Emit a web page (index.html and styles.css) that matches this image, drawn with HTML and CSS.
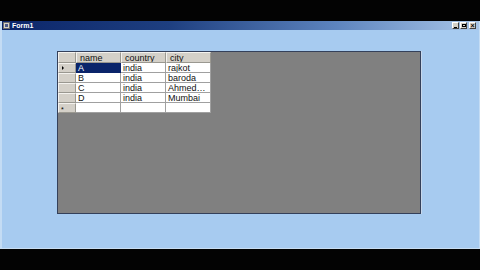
FILE: index.html
```html
<!DOCTYPE html>
<html>
<head>
<meta charset="utf-8">
<link rel="stylesheet" href="styles.css">
</head>
<body>
<div class="screen">
  <div class="black-top"></div>
  <div class="window">
    <div class="titlebar">
      <div class="app-icon"><div class="icon-inner"></div></div>
      <span class="title">Form1</span>
      <div class="spacer"></div>
      <div class="tbtn"><span class="g-min"></span></div>
      <div class="tbtn"><span class="g-max"></span></div>
      <div class="tbtn close"><span class="g-x">×</span></div>
    </div>
    <div class="client">
      <div class="grid">
        <div class="table">
          <div class="hc corner"></div>
          <div class="hc">name</div>
          <div class="hc">country</div>
          <div class="hc">city</div>

          <div class="rh"><span class="arrow"></span></div>
          <div class="c sel">A</div>
          <div class="c">india</div>
          <div class="c">rajkot</div>

          <div class="rh"></div>
          <div class="c">B</div>
          <div class="c">india</div>
          <div class="c">baroda</div>

          <div class="rh"></div>
          <div class="c">C</div>
          <div class="c">india</div>
          <div class="c">Ahmed…</div>

          <div class="rh"></div>
          <div class="c">D</div>
          <div class="c">india</div>
          <div class="c">Mumbai</div>

          <div class="rh"><span class="star">*</span></div>
          <div class="c"></div>
          <div class="c"></div>
          <div class="c"></div>
        </div>
      </div>
    </div>
  </div>
  <div class="black-bottom"></div>
</div>
</body>
</html>
```
FILE: styles.css
```css
html, body {
  margin: 0;
  padding: 0;
  background: #030303;
  width: 480px;
  height: 270px;
  overflow: hidden;
  font-family: "Liberation Sans", Arial, sans-serif;
}
.screen {
  display: flex;
  flex-direction: column;
  width: 480px;
  height: 270px;
}
.black-top {
  height: 21px;
  background: #030303;
  flex: none;
}
.window {
  display: flex;
  flex-direction: column;
  height: 228px;
  flex: none;
  background: #a7cbf0;
  border-left: 2px solid #c4dcf4;
  border-right: 1px solid #c4dcf4;
  border-bottom: 1px solid #c8ddf2;
  box-sizing: border-box;
}
.titlebar {
  height: 9px;
  flex: none;
  display: flex;
  align-items: center;
  background: linear-gradient(to right, #0b2569 0%, #1e3f80 35%, #5d84be 70%, #a9c6e8 100%);
  padding-right: 3px;
}
.app-icon {
  width: 7px;
  height: 7px;
  margin-left: 1px;
  background: #d8d4c8;
  border: 1px solid #6d6d6d;
  box-sizing: border-box;
  display: flex;
  align-items: center;
  justify-content: center;
}
.icon-inner {
  width: 3px;
  height: 3px;
  background: #4a5a8a;
}
.title {
  color: #ffffff;
  font-size: 7px;
  font-weight: bold;
  margin-left: 2px;
  line-height: 9px;
}
.spacer { flex: 1; }
.tbtn {
  width: 7px;
  height: 7px;
  background: #d4d0c8;
  border-top: 1px solid #ffffff;
  border-left: 1px solid #ffffff;
  border-right: 1px solid #404040;
  border-bottom: 1px solid #404040;
  box-sizing: border-box;
  margin-left: 1px;
  display: flex;
  align-items: center;
  justify-content: center;
}
.tbtn.close { margin-left: 2px; }
.g-min {
  width: 3px;
  height: 1px;
  background: #000;
  margin-top: 3px;
}
.g-max {
  width: 4px;
  height: 3px;
  border: 1px solid #000;
  box-sizing: border-box;
}
.g-x {
  font-size: 7px;
  line-height: 5px;
  color: #000;
  font-weight: bold;
}
.client {
  flex: 1;
  padding-left: 55px;
  padding-top: 21px;
}
.grid {
  width: 364px;
  height: 163px;
  box-sizing: border-box;
  background: #808080;
  border: 1px solid #34405a;
  box-shadow: 1px 0 0 #c8d8ec;
}
.table {
  display: grid;
  grid-template-columns: 18px 45px 45px 45px;
  grid-template-rows: 11px 10px 10px 10px 10px 10px;
  width: 153px;
  background: #ffffff;
}
.hc, .rh {
  background: #d4d0c8;
  box-sizing: border-box;
  border-right: 1px solid #9a9890;
  border-bottom: 1px solid #9a9890;
  border-top: 1px solid #f4f2ee;
  border-left: 1px solid #f4f2ee;
}
.hc {
  font-size: 9px;
  line-height: 10px;
  color: #111;
  padding-left: 3px;
  white-space: nowrap;
  overflow: hidden;
}
.rh {
  display: flex;
  align-items: center;
  padding-left: 2px;
}
.arrow {
  width: 0;
  height: 0;
  border-top: 2px solid transparent;
  border-bottom: 2px solid transparent;
  border-left: 2px solid #000;
  margin-left: 1px;
}
.star {
  font-size: 7px;
  line-height: 7px;
  color: #000;
  margin-top: 3px;
}
.c {
  box-sizing: border-box;
  border-right: 1px solid #a0a0a0;
  border-bottom: 1px solid #a0a0a0;
  font-size: 9px;
  line-height: 10px;
  color: #111;
  padding-left: 2px;
  white-space: nowrap;
  overflow: hidden;
  background: #ffffff;
}
.c.sel {
  background: #0a246a;
  color: #ffffff;
  border-right-color: #0a246a;
  border-bottom-color: #0a246a;
}
.black-bottom {
  flex: 1;
  background: #030303;
}
```
